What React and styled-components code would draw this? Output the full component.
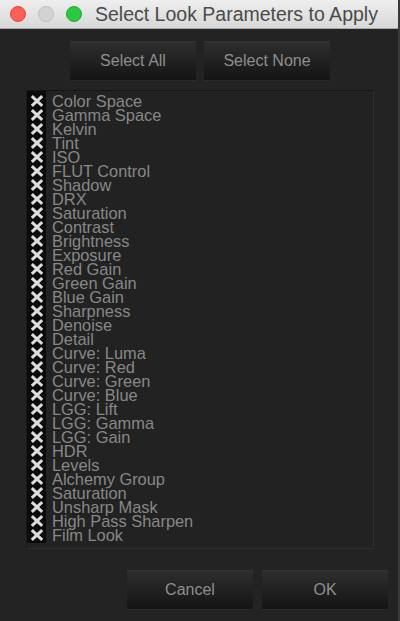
import React from "react";
import styled, { createGlobalStyle } from "styled-components";

const Global = createGlobalStyle`
  html, body { margin: 0; padding: 0; background: #232323; }
  body { width: 400px; height: 621px; overflow: hidden; font-family: "Liberation Sans", Arial, sans-serif; }
  #root { width: 400px; height: 621px; }
`;

const Window = styled.div`
  width: 400px;
  height: 621px;
  display: flex;
  flex-direction: column;
  background: #232323;
  box-sizing: border-box;
  border-right: 2px solid #3a3a3a;
`;

const TitleBar = styled.div`
  height: 29px;
  flex: none;
  box-sizing: border-box;
  display: flex;
  align-items: center;
  padding-left: 10px;
  background: linear-gradient(to bottom, #eeeeee, #d8d8d8);
  border-bottom: 1px solid #a9a9a9;
`;

const Light = styled.span`
  width: 16px;
  height: 16px;
  border-radius: 50%;
  box-sizing: border-box;
  margin-right: 12px;
  background: ${(p) => p.$fill};
  border: 1px solid ${(p) => p.$edge};
`;

const Title = styled.div`
  margin-left: 1px;
  font-size: 19.5px;
  color: #4b4b4b;
  white-space: nowrap;
`;

const Body = styled.div`
  flex: 1;
  display: flex;
  flex-direction: column;
  padding: 12px 0 0 0;
`;

const TopRow = styled.div`
  display: flex;
  justify-content: center;
  gap: 8px;
  padding-left: 2px;
`;

const BottomRow = styled.div`
  display: flex;
  justify-content: flex-end;
  gap: 9px;
  padding-right: 10px;
  margin-top: 21px;
`;

const Button = styled.button`
  width: 126px;
  height: 39px;
  padding: 0;
  border: none;
  border-top: 1px solid #333;
  background: linear-gradient(to bottom, #2e2e2e, #141414);
  color: #8e8e8e;
  font-family: "Liberation Sans", Arial, sans-serif;
  font-size: 16px;
  box-shadow: 0 1px 0 #2a2a2a;
`;

const ListBox = styled.div`
  margin: 10px 24px 0 26px;
  height: 459px;
  box-sizing: border-box;
  padding-top: 3px;
  border-top: 1px solid #151515;
  border-left: 1px solid #1a1a1a;
  border-right: 1px solid #2e2e2e;
  border-bottom: 1px solid #2e2e2e;
  background:
    linear-gradient(to right, #0b0b0b 0, #0b0b0b 19px, transparent 19px) no-repeat 0 0 / 19px calc(100% - 5px),
    #222222;
`;

const Row = styled.div`
  display: flex;
  align-items: center;
  height: 14px;
`;

const Check = styled.span`
  width: 19px;
  height: 14px;
  flex: none;
  display: flex;
  align-items: center;
  justify-content: center;
`;

const Label = styled.span`
  margin-left: 6px;
  font-size: 16.4px;
  line-height: 14px;
  color: #888888;
  white-space: nowrap;
`;

const XMark = () => (
  <svg width="14" height="12" viewBox="0 0 14 12">
    <path d="M1.8 1.2 L12.2 10.8 M12.2 1.2 L1.8 10.8" stroke="#dcdcdc" strokeWidth="3" strokeLinecap="butt" />
  </svg>
);

const items = [
  "Color Space", "Gamma Space", "Kelvin", "Tint", "ISO", "FLUT Control", "Shadow", "DRX",
  "Saturation", "Contrast", "Brightness", "Exposure", "Red Gain", "Green Gain", "Blue Gain",
  "Sharpness", "Denoise", "Detail", "Curve: Luma", "Curve: Red", "Curve: Green", "Curve: Blue",
  "LGG: Lift", "LGG: Gamma", "LGG: Gain", "HDR", "Levels", "Alchemy Group", "Saturation",
  "Unsharp Mask", "High Pass Sharpen", "Film Look",
];

export default function App() {
  return (
    <>
      <Global />
      <Window>
        <TitleBar>
          <Light $fill="#fc5f57" $edge="#e0443e" />
          <Light $fill="#d3d3d3" $edge="#c0c0c0" />
          <Light $fill="#2cc840" $edge="#1faa2f" />
          <Title>Select Look Parameters to Apply</Title>
        </TitleBar>
        <Body>
          <TopRow>
            <Button>Select All</Button>
            <Button>Select None</Button>
          </TopRow>
          <ListBox>
            {items.map((t, i) => (
              <Row key={i}>
                <Check><XMark /></Check>
                <Label>{t}</Label>
              </Row>
            ))}
          </ListBox>
          <BottomRow>
            <Button>Cancel</Button>
            <Button>OK</Button>
          </BottomRow>
        </Body>
      </Window>
    </>
  );
}
